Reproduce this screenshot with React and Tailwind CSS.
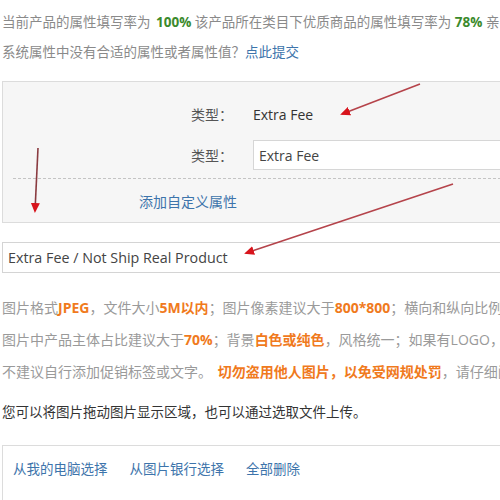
import React from 'react';

const font = { fontFamily: "'Open Sans', 'Noto Sans CJK SC', sans-serif" };

const Arrows = () => (
  <svg className="absolute left-0 top-0 pointer-events-none" width="500" height="500">
    <defs>
      <marker id="head" markerWidth="10" markerHeight="9" refX="8" refY="4.5" orient="auto" markerUnits="userSpaceOnUse">
        <path d="M0,0 L10,4.5 L0,9 Z" fill="#d8141c" />
      </marker>
    </defs>
    <line x1="420" y1="84" x2="342" y2="114" stroke="#b5434a" strokeWidth="1.6" markerEnd="url(#head)" />
    <line x1="38" y1="148" x2="35" y2="211" stroke="#8a3b40" strokeWidth="1.6" markerEnd="url(#head)" />
    <line x1="453" y1="184" x2="246" y2="253" stroke="#b5434a" strokeWidth="1.6" markerEnd="url(#head)" />
  </svg>
);

export default function App() {
  return (
    <div className="relative w-[500px] h-[500px] overflow-hidden bg-white text-[13.5px] whitespace-nowrap" style={font}>
      {/* fill-rate summary */}
      <div className="pl-[2px] mt-[12px] leading-[20px] text-[#8a8a8a]">
        当前产品的属性填写率为 <b className="text-[#3b8a2c] ml-[2px]">100%</b> 该产品所在类目下优质商品的属性填写率为 <b className="text-[#3b8a2c]">78%</b> 亲，建议您完善
      </div>
      <div className="pl-[2px] mt-[10px] leading-[20px] text-[#8a8a8a]">
        系统属性中没有合适的属性或者属性值？<span className="text-[#3d74ab]">点此提交</span>
      </div>

      {/* attribute box */}
      <div className="ml-[2px] mt-[19px] w-[560px] h-[142px] border border-[#dcdcdc] bg-[#f6f6f6] text-[14px]">
        <div className="flex items-center h-[30px] mt-[17px]">
          <span className="w-[232px] text-right text-[#555] pr-[2px]">类型：</span>
          <span className="ml-[18px] text-[#333]">Extra Fee</span>
        </div>
        <div className="flex items-center h-[30px] mt-[11px]">
          <span className="w-[232px] text-right text-[#555] pr-[2px]">类型：</span>
          <div className="ml-[18px] flex-1 h-[30px] border border-[#d6d6d6] bg-white flex items-center pl-[5px] text-[#444]">
            Extra Fee
          </div>
        </div>
        <div className="mx-[10px] mt-[8px] border-t border-dashed border-[#c4c4c4]"></div>
        <div className="pl-[136px] mt-[12px] text-[#3d74ab]">添加自定义属性</div>
      </div>

      {/* product title input */}
      <div className="ml-[2px] mt-[19px] w-[560px] h-[31px] border border-[#d4d4d4] bg-white flex items-center pl-[5px] text-[14.3px] text-[#444]">
        Extra Fee / Not Ship Real Product
      </div>

      {/* image tips */}
      <div className="pl-[2px] mt-[25px] flex flex-col gap-[12px] text-[14px] leading-[20px] text-[#9a9a9a]">
        <div>
          图片格式<b className="text-[#f07a1d]">JPEG</b>，文件大小<b className="text-[#f07a1d]">5M以内</b>；图片像素建议大于<b className="text-[#f07a1d]">800*800</b>；横向和纵向比例建议1:1
        </div>
        <div>
          图片中产品主体占比建议大于<b className="text-[#f07a1d]">70%</b>；背景<b className="text-[#f07a1d]">白色或纯色</b>，风格统一；如果有LOGO，建议放置在左上角
        </div>
        <div>
          不建议自行添加促销标签或文字。 <b className="text-[#f07a1d] ml-[2px]">切勿盗用他人图片，以免受网规处罚</b>，请仔细阅读规则
        </div>
      </div>

      <div className="pl-[2px] mt-[20px] leading-[20px] text-[#333]">
        您可以将图片拖动图片显示区域，也可以通过选取文件上传。
      </div>

      {/* upload box */}
      <div className="ml-[2px] mt-[23px] w-[560px] h-[80px] border border-[#dcdcdc] bg-white">
        <div className="flex gap-[22px] pl-[10px] mt-[13px] leading-[20px] text-[#3d74ab]">
          <span>从我的电脑选择</span>
          <span>从图片银行选择</span>
          <span>全部删除</span>
        </div>
      </div>

      <Arrows />
    </div>
  );
}
